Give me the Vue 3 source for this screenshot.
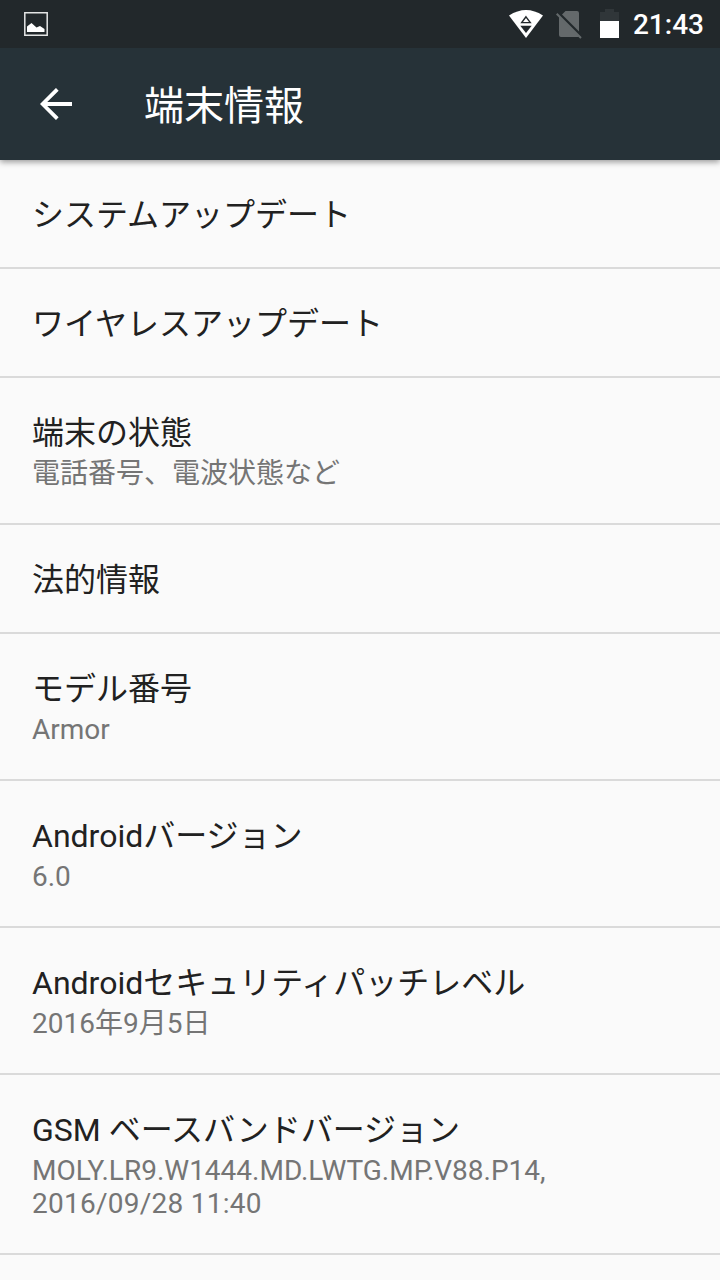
<template>
  <div class="screen">
    <header class="status-bar">
      <svg class="picture-icon" viewBox="0 0 24 24">
        <path d="M.8 .8H23.2V23.2H.8Z" fill="none" stroke="#e4e5e5" stroke-width="1.5" />
        <path d="M3 20V14.5L7.5 11L12.5 15.5L16 14L20.5 17V20Z" fill="#fff" />
      </svg>
      <div class="status-right">
        <svg class="wifi-icon" viewBox="0 0 34 28">
          <path d="M0 5.6Q17 -5.4 34 5.6L17 28Z" fill="#fff" />
          <path d="M17 6.8L21.3 12.6H12.7Z" fill="none" stroke="#22282b" stroke-width="1.4" />
          <path d="M11.3 15.7H22.7L17 23Z" fill="#22282b" />
        </svg>
        <svg class="sim-icon" viewBox="0 0 26 28">
          <path d="M9.5 0H21Q23 0 23 2V20.5L6 3.5ZM3 5.5L23 25.5Q22.5 26 21 26H5Q3 26 3 24Z" fill="#64696b" />
          <path d="M.7 2.7L25 27" fill="none" stroke="#64696b" stroke-width="2" />
        </svg>
        <svg class="battery-icon" viewBox="0 0 19 29">
          <path d="M5 0H14V3H19V12H0V3H5Z" fill="#303639" />
          <path d="M0 12H19V29H0Z" fill="#fff" />
        </svg>
        <span class="clock">21:43</span>
      </div>
    </header>
    <div class="toolbar">
      <svg class="back-icon" viewBox="0 0 32 32">
        <path d="M17.3 1.3L2.6 16L17.3 30.7M3 16H32" fill="none" stroke="#fff" stroke-width="3.8" />
      </svg>
      <h1>端末情報</h1>
    </div>
    <main>
      <div v-for="item in items" :key="item.title" class="item">
        <h2>{{ item.title }}</h2>
        <p v-if="item.summary">{{ item.summary }}</p>
        <p v-if="item.date" class="date">{{ item.date }}</p>
      </div>
    </main>
  </div>
</template>

<script setup>
const items = [
  { title: 'システムアップデート' },
  { title: 'ワイヤレスアップデート' },
  { title: '端末の状態', summary: '電話番号、電波状態など' },
  { title: '法的情報' },
  { title: 'モデル番号', summary: 'Armor' },
  { title: 'Androidバージョン', summary: '6.0' },
  { title: 'Androidセキュリティパッチレベル', summary: '2016年9月5日' },
  {
    title: 'GSM ベースバンドバージョン',
    summary: 'MOLY.LR9.W1444.MD.LWTG.MP.V88.P14,',
    date: '2016/09/28 11:40',
  },
];
</script>

<style>
body {
  margin: 0;
}
</style>

<style scoped>
.screen {
  height: 1280px;
  overflow: hidden;
  background: #fafafa;
  font-family: Roboto, 'Noto Sans CJK JP', sans-serif;
}

.status-bar {
  display: flex;
  justify-content: space-between;
  height: 48px;
  box-sizing: border-box;
  padding: 0 16px 0 24px;
  background: #22282b;
}

.picture-icon {
  width: 24px;
  height: 24px;
  margin-top: 12px;
}

.status-right {
  display: flex;
  color: #fff;
}

.wifi-icon {
  width: 34px;
  height: 28px;
  margin: 10px 13px 0 0;
}

.sim-icon {
  width: 26px;
  height: 28px;
  margin: 11px 18px 0 0;
}

.battery-icon {
  width: 19px;
  height: 29px;
  margin: 9px 14px 0 0;
}

.clock {
  font-size: 28px;
  font-weight: 500;
  line-height: 50px;
}

/* sits above the list so its shadow falls on the first row */
.toolbar {
  position: relative;
  display: flex;
  align-items: center;
  height: 112px;
  box-sizing: border-box;
  padding-left: 40px;
  background: #263238;
  box-shadow: 0 2px 6px rgba(0, 0, 0, 0.4);
  clip-path: inset(0 0 -12px);
}

.back-icon {
  width: 32px;
  height: 32px;
  margin-right: 72px;
}

h1 {
  margin: 0;
  padding-top: 6px;
  color: #fff;
  font-size: 40px;
  font-weight: 400;
  line-height: 48px;
}

.item {
  box-sizing: border-box;
  padding: 36px 32px 33px;
  border-bottom: 2px solid #dadada;
}

h2 {
  margin: 0;
  color: #212121;
  font-size: 32px;
  font-weight: 400;
  line-height: 38px;
}

p {
  margin: 5px 0 0;
  color: #757575;
  font-size: 28px;
  line-height: 33px;
}

.date {
  margin-top: 0;
  letter-spacing: 0.25px;
}
</style>
